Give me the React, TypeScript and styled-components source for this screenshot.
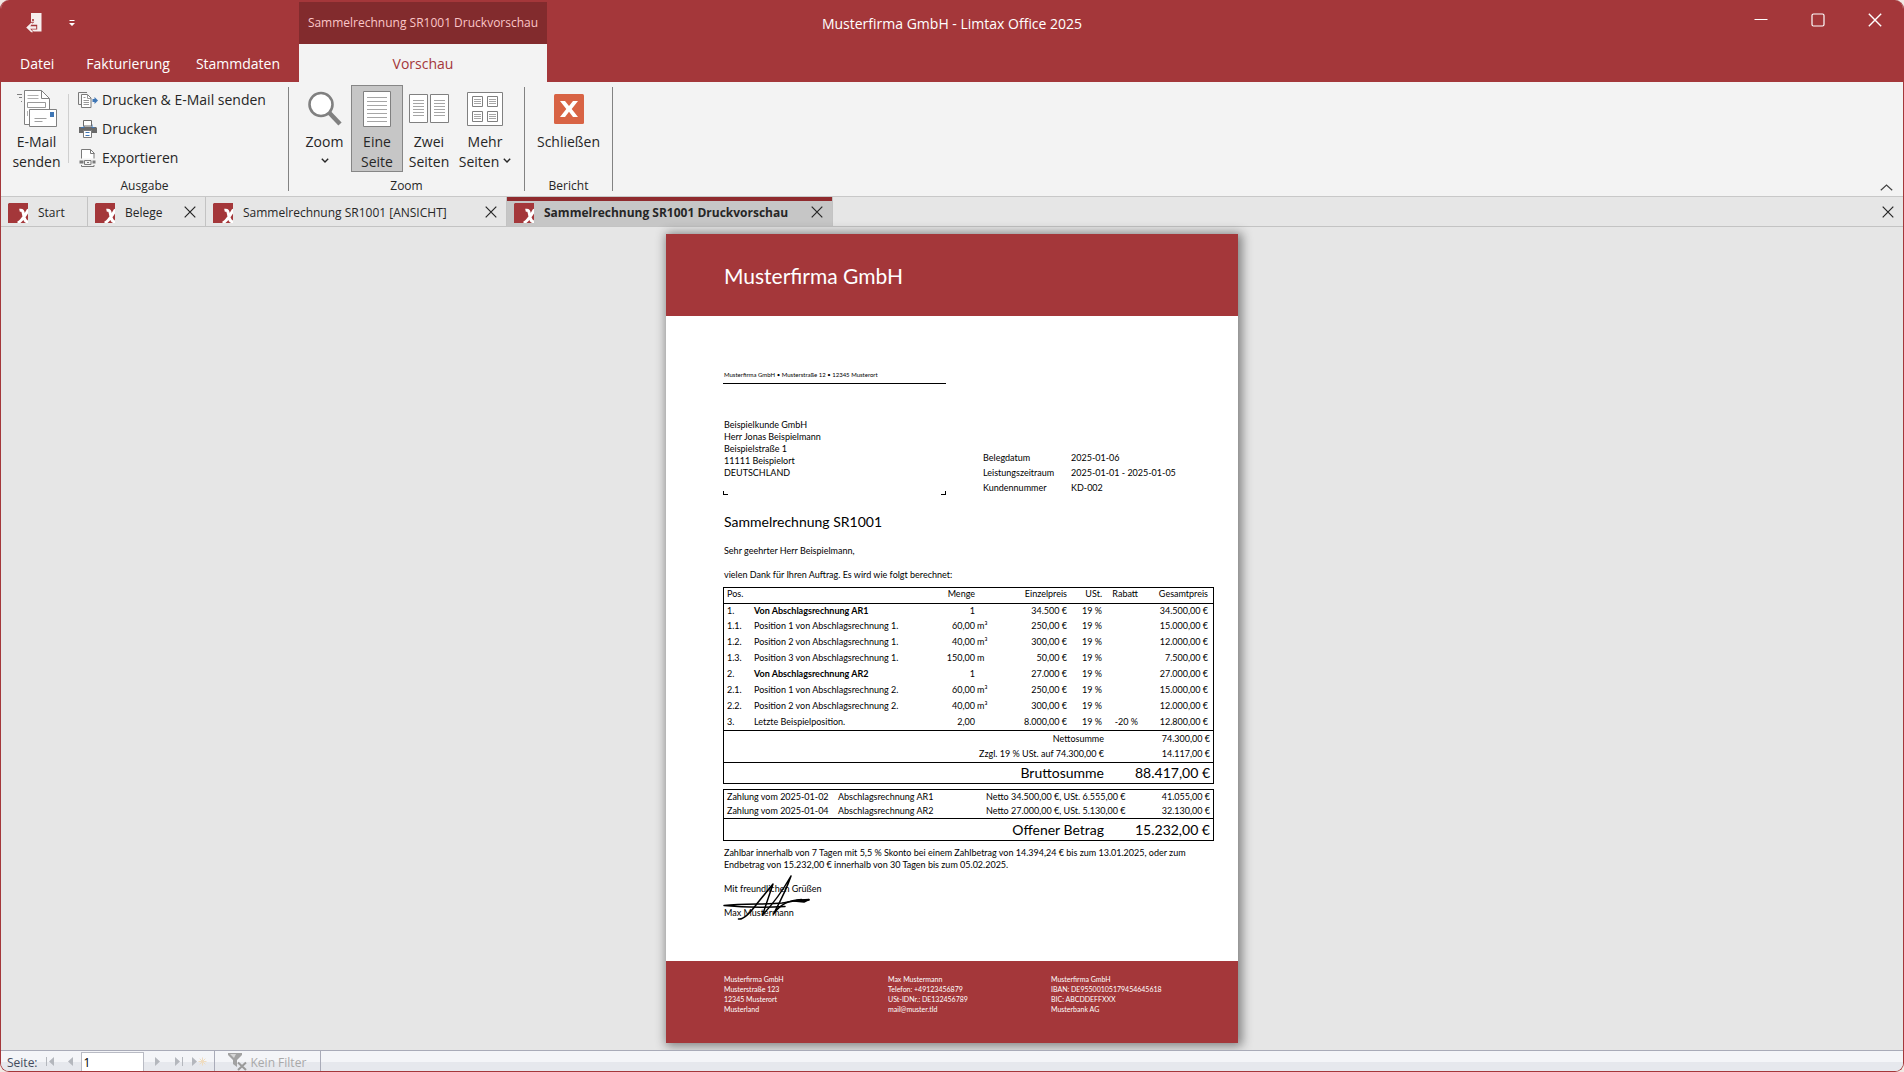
import React from "react";
import styled, { createGlobalStyle, css } from "styled-components";

const red = "#a4373a";
const uiFont = `"Open Sans", "Noto Sans", sans-serif`;
const paperFont = `Lato, "Open Sans", sans-serif`;

const GlobalStyle = createGlobalStyle`
  *, *::before, *::after { box-sizing: border-box; }
  body { margin: 0; background: #f1e9e4; font-family: ${uiFont}; color: #262626; }
  button, input { font: inherit; color: inherit; }
  button { padding: 0; border: 0; background: none; cursor: pointer; }
  svg { display: block; flex: none; }
`;

const Window = styled.div`
  display: flex;
  flex-direction: column;
  min-height: 100vh;
  overflow: hidden;
  border: 1px solid ${red};
  border-top: 0;
  border-radius: 9px;
  background: #e6e6e6;
`;

/* ---------- title bar ---------- */

const TitleBar = styled.header`
  display: grid;
  grid-template-columns: 1fr auto 1fr;
  height: 82px;
  background: ${red};
  color: #fff;
`;

const TitleLeft = styled.div`
  display: flex;
`;

const MenuArea = styled.div`
  display: flex;
  flex-direction: column;
  width: 298px;
`;

const QuickAccess = styled.div`
  display: flex;
  align-items: center;
  gap: 27px;
  height: 44px;
  padding: 2px 0 0 25px;
`;

const MenuTabs = styled.nav`
  display: flex;
  height: 38px;
`;

const MenuTab = styled.button<{ $pad: number }>`
  padding: 2px ${(p) => p.$pad}px 0;
  font-size: 14px;
  line-height: 20px;
`;

const ContextGroup = styled.div`
  display: flex;
  flex-direction: column;
  width: 248px;
  padding-top: 2px;
`;

const ContextTitle = styled.div`
  height: 42px;
  background: #822b2d;
  color: #fbc6c8;
  font-size: 12px;
  line-height: 41px;
  text-align: center;
  white-space: nowrap;
`;

const ContextTab = styled.button`
  flex: 1;
  background: #f3f3f3;
  color: ${red};
  font-size: 14px;
`;

const WindowTitle = styled.h1`
  margin: 0;
  font-size: 14px;
  font-weight: 400;
  line-height: 48px;
`;

const WindowControls = styled.div`
  display: flex;
  justify-content: flex-end;
  height: 40px;
`;

const WindowButton = styled.button`
  display: flex;
  align-items: center;
  justify-content: center;
  width: 57px;
`;

/* ---------- ribbon ---------- */

const Ribbon = styled.section`
  display: flex;
  height: 114px;
  background: #f3f3f3;
`;

const Group = styled.div<{ $width: number }>`
  display: flex;
  flex-direction: column;
  min-width: ${(p) => p.$width}px;
  padding-top: 3px;
`;

const GroupBody = styled.div`
  display: flex;
  flex: none;
  justify-content: center;
  height: 87px;
`;

const WideGroupBody = styled(GroupBody)`
  justify-content: flex-start;
  padding-left: 7px;
`;

const GroupLabel = styled.div`
  margin-top: 4px;
  font-size: 12px;
  line-height: 20px;
  text-align: center;
`;

const GroupDivider = styled.div`
  width: 1px;
  margin: 5px 0;
  background: #828282;
`;

const InnerDivider = styled.div`
  width: 1px;
  margin: 9px 9px 9px 3px;
  background: #cfcfcf;
`;

const BigButton = styled.button<{ $width: number; $active?: boolean }>`
  display: flex;
  flex-direction: column;
  align-items: center;
  width: ${(p) => p.$width}px;
  font-size: 14px;
  line-height: 20px;
  white-space: nowrap;
  ${(p) =>
    p.$active &&
    css`
      background: #c6c6c6;
      box-shadow: inset 0 0 0 1px #868686;
    `}
`;

const BigIcon = styled.span`
  display: flex;
  align-items: center;
  justify-content: center;
  height: 47px;
`;

const ButtonLine = styled.span`
  display: flex;
  align-items: center;
  gap: 4px;
  height: 20px;
`;

const CommandList = styled.div`
  display: flex;
  flex-direction: column;
`;

const Command = styled.button`
  display: flex;
  align-items: center;
  gap: 4px;
  height: 29px;
  font-size: 14px;
  white-space: nowrap;
`;

const CollapseButton = styled.button`
  display: flex;
  align-items: flex-end;
  margin-left: auto;
  padding: 0 10px 5px;
`;

/* ---------- document tabs ---------- */

const TabStrip = styled.div`
  display: flex;
  height: 31px;
  border-top: 1px solid #c8c8c8;
  border-bottom: 1px solid #c3c3c3;
`;

const DocTab = styled.div<{ $width: number; $active?: boolean }>`
  display: flex;
  align-items: center;
  width: ${(p) => p.$width}px;
  padding: 0 9px 0 7px;
  border-right: 1px solid #c3c3c3;
  ${(p) =>
    p.$active &&
    css`
      background: #c6c6c6;
      box-shadow: inset 0 4px 0 #8f2a2d;
    `}
`;

const DocTabName = styled.button<{ $active?: boolean }>`
  display: flex;
  align-items: center;
  gap: 10px;
  padding-top: 2px;
  font-size: 12px;
  font-weight: ${(p) => (p.$active ? 700 : 400)};
  white-space: nowrap;
`;

const CloseButton = styled.button`
  display: flex;
  margin-left: auto;
  align-items: center;
`;

const StripClose = styled(CloseButton)`
  padding-right: 9px;
`;

/* ---------- preview ---------- */

const Canvas = styled.main`
  display: flex;
  flex: 1;
  justify-content: center;
  align-items: flex-start;
  padding: 7px 0;
`;

const Paper = styled.article`
  display: flex;
  flex-direction: column;
  width: 572px;
  min-height: 809px;
  background: #fff;
  color: #000;
  font-family: ${paperFont};
  font-size: 9px;
  line-height: 12px;
  white-space: nowrap;
  box-shadow: 2px 1px 10px 2px rgba(0, 0, 0, 0.45);
`;

const PaperHeader = styled.header`
  height: 82px;
  padding-left: 58px;
  background: ${red};
  color: #fff;
  font-size: 21px;
  line-height: 84px;
`;

const PaperBody = styled.div`
  flex: 1;
  padding: 53px 24px 0 57px;
`;

const Sender = styled.div`
  width: 223px;
  height: 15px;
  padding-left: 1px;
  border-bottom: 1px solid #000;
  font-size: 6px;
`;

const AddressRow = styled.div`
  display: flex;
  gap: 37px;
  height: 111px;
`;

const AddressWindow = styled.div`
  display: flex;
  flex-direction: column;
  justify-content: space-between;
  width: 223px;
  padding-top: 35px;
`;

const Address = styled.address`
  padding-left: 1px;
  font-style: normal;
`;

const Corners = styled.div`
  display: flex;
  justify-content: space-between;
`;

const Corner = styled.span<{ $side: "left" | "right" }>`
  width: 5px;
  height: 4px;
  border-bottom: 1px solid #000;
  border-${(p) => p.$side}: 1px solid #000;
`;

const MetaList = styled.dl`
  display: grid;
  grid-template-columns: 88px auto;
  align-content: start;
  margin: 0;
  padding-top: 66px;
  line-height: 15px;
`;

const MetaValue = styled.dd`
  margin: 0;
`;

const InvoiceTitle = styled.h2`
  margin: 17px 0 0 1px;
  font-size: 14px;
  font-weight: 400;
  line-height: 20px;
`;

const Paragraph = styled.p<{ $top: number }>`
  margin: ${(p) => p.$top}px 0 0 1px;
`;

const Sheet = styled.table<{ $top: number }>`
  width: 100%;
  margin-top: ${(p) => p.$top}px;
  border: 1px solid #000;
  border-spacing: 0;
  table-layout: fixed;
`;

const Row = styled.tr<{ $height: number; $ruled?: boolean }>`
  height: ${(p) => p.$height}px;
  > * {
    ${(p) => p.$ruled && "border-top: 1px solid #000;"}
  }
`;

const Cell = styled.td<{ $right?: boolean; $pad?: number; $bold?: boolean; $large?: boolean }>`
  padding: 0;
  padding-${(p) => (p.$right ? "right" : "left")}: ${(p) => p.$pad ?? 0}px;
  text-align: ${(p) => (p.$right ? "right" : "left")};
  font-weight: ${(p) => (p.$bold ? 700 : 400)};
  ${(p) => p.$large && "font-size: 14px;"}
`;

const HeadCell = styled(Cell).attrs({ as: "th" })`
  vertical-align: top;
`;

const SignatureBlock = styled.div`
  position: relative;
  margin: 6px 0 0 1px;
  line-height: 24px;
`;

const SignatureInk = styled.svg`
  position: absolute;
  left: -1px;
  top: -3px;
`;

const PaperFooter = styled.footer`
  display: grid;
  grid-template-columns: 164px 163px auto;
  height: 82px;
  padding: 13px 0 0 58px;
  background: ${red};
  color: #fff;
  font-size: 7px;
  line-height: 10px;
`;

/* ---------- record bar ---------- */

const StatusBar = styled.footer`
  display: flex;
  align-items: stretch;
  height: 21px;
  border-top: 1px solid #a9abb8;
  background: linear-gradient(#f4f5f8 0 11px, #e6e8ed 11px);
  color: #444b5c;
  font-size: 12px;
`;

const PageLabel = styled.label`
  padding: 0 8px 0 6px;
  line-height: 23px;
`;

const NavButton = styled.button<{ $width: number }>`
  width: ${(p) => p.$width}px;
`;

const PageInput = styled.input`
  width: 63px;
  height: 19px;
  margin-top: 1px;
  padding: 1px 2px 0;
  border: 1px solid #b9bbc4;
  border-bottom: 0;
  background: #fff;
  color: #000;
`;

const FilterButton = styled.button`
  display: flex;
  align-items: center;
  gap: 4px;
  width: 107px;
  margin-left: 6px;
  padding: 2px 0 0 13px;
  border: solid #a9abb8;
  border-width: 0 1px;
  color: #a9a9a9;
`;

/* ---------- icons ---------- */

const CloseGlyph = ({ size = 12 }: { size?: number }) => (
  <svg width={size} height={size} viewBox="0 0 12 12" stroke="currentColor" strokeWidth="1.2" fill="none">
    <path d="M.7.7l10.6 10.6M11.3.7L.7 11.3" />
  </svg>
);

const Chevron = () => (
  <svg width="8" height="8" viewBox="0 0 8 8" stroke="currentColor" strokeWidth="1.4" fill="none">
    <path d="M.8.8L4 4 7.2.8" />
  </svg>
);

const AppLogo = () => (
  <svg width="20" height="20" viewBox="0 0 20 20">
    <path d="M1 0h19v20H0V1z" fill={red} />
    <path d="M9.5 19.8c3 0 9-9.5 11-13.300M11.500 7.300c3.500-.8 3.500 1.500 4.300 5.500s1.500 6.200 4.200 5.700" stroke="#fff" strokeWidth="3" fill="none" />
  </svg>
);

const DoorIcon = () => (
  <svg width="16" height="20" viewBox="0 0 16 20">
    <path d="M5 0h10.500v18.500H5z" fill="#f6eeee" />
    <path d="M0 14.200L5.500 8.800h2.800L5.600 11.800h5.600v4.700H5.600l2.700 3H5.500z" fill={red} />
    <path d="M.2 14.500l5-4.800h2l-3 3.500h6v2.500h-6l3 3.500h-2z" fill="#f6eeee" />
    <circle cx="7" cy="7" r="1.100" fill={red} />
  </svg>
);

const QuickMenuIcon = () => (
  <svg width="6" height="7" viewBox="0 0 6 7" fill="#fff">
    <path d="M.5 0h5v1h-5zM0 3h6L3 6z" />
  </svg>
);

const MailIcon = () => (
  <svg width="40" height="38" viewBox="0 0 40 38" fill="none" stroke="#808080" strokeWidth="1">
    <path d="M0 4.500h5M2 7.500h3M4 11.500h1" />
    <path d="M7.500.5h17l8 8v26h-25z" fill="#fff" />
    <path d="M24.500.5v8h8" />
    <path d="M10.500 5.500h11M10.500 8.500h11M10.500 21v5" stroke="#b0b0b0" />
    <path d="M10.500 12.500h18v5h-18z" stroke="#999" />
    <path d="M11 19h22v2H11z" fill="#fff" stroke="none" />
    <path d="M12.500 19.500h27v17h-27z" fill="#fff" />
    <path d="M17.500 28.500h12M17.500 31.500h8" stroke="#a0a0a0" />
    <path d="M33 22h4v5h-4z" fill="#3f76b5" stroke="none" />
  </svg>
);

const PrintMailIcon = () => (
  <svg width="20" height="18" viewBox="0 0 20 18" fill="none" stroke="#7a7a7a">
    <path d="M3 13.500H.5V1.500h8.500" />
    <path d="M3.500 3.500h6l3.500 3.500v9.500H3.500z" fill="#fff" />
    <path d="M9.500 3.500v4H13M5.500 6.500h2M5.500 9.500h5.500M5.500 11.500h5.500M5.500 13.500h5.500" stroke="#9a9a9a" />
    <path d="M14.500 9.500h3" stroke="#3f76b5" strokeWidth="3" />
    <path d="M16.500 6l3.500 3.500-3.500 3.500z" fill="#3f76b5" stroke="none" />
  </svg>
);

const PrinterIcon = () => (
  <svg width="20" height="18" viewBox="0 0 20 18">
    <path d="M1 7h17l1 1v5H1z" fill="#6a6a6a" />
    <path d="M3 7.500h3V4.500h8v3h2.500" stroke="#3f76b5" fill="none" />
    <path d="M5.500.5h8V6h-8z" fill="#fff" stroke="#6a6a6a" />
    <path d="M5.500 10.500h8v7h-8z" fill="#fff" stroke="#7a7a7a" />
    <path d="M7.500 12.500h4M7.500 15.500h4" stroke="#3f76b5" />
  </svg>
);

const ExportIcon = () => (
  <svg width="20" height="18" viewBox="0 0 20 18" fill="none" stroke="#7a7a7a">
    <path d="M3.500 9.500V.5h9l3.500 3.500v5.500" fill="#fff" />
    <path d="M12.500.5v4h4M3.500 16v1.500h12.500V16" />
    <path d="M2.500 12.500h2v1h-2zM15.500 12.500h1v1h-1z" strokeWidth="2" />
    <path d="M6.500 11.500h6.500v4h-6.500zM9 13.500h2" />
  </svg>
);

const ZoomIcon = () => (
  <svg width="36" height="36" viewBox="0 0 36 36" stroke="#808080">
    <path d="M22 21.500L33 33" strokeWidth="4.500" />
    <circle cx="14" cy="13.500" r="11.500" fill="#fff" strokeWidth="2.600" />
  </svg>
);

const lines = (x: number, y: number, w: number, count: number, step: number) =>
  Array.from({ length: count }, (_, i) => `M${x} ${y + i * step}h${w}`).join("");

const OnePageIcon = () => (
  <svg width="28" height="36" viewBox="0 0 28 36" fill="none">
    <path d="M.5.5h27v35H.5z" fill="#fff" stroke="#808080" />
    <path d={lines(4, 6.5, 20, 7, 4)} stroke="#a6a6a6" />
  </svg>
);

const TwoPagesIcon = () => (
  <svg width="40" height="30" viewBox="0 0 40 30" fill="none">
    <path d="M.5.5h18v28H.5zM21.500.5h18v28h-18z" fill="#fff" stroke="#808080" />
    <path d={lines(4, 6.5, 11, 6, 3) + lines(25, 6.5, 11, 6, 3)} stroke="#a6a6a6" />
  </svg>
);

const ManyPagesIcon = () => (
  <svg width="36" height="34" viewBox="0 0 36 34" fill="none">
    <path d="M.5.5h35v33H.5z" fill="#fff" stroke="#808080" />
    <path d="M5.500 4.500h10v10h-10zM20.500 4.500h10v10h-10zM5.500 19.500h10v10h-10zM20.500 19.500h10v10h-10z" stroke="#808080" />
    <path
      d={lines(7, 7.5, 7, 3, 2) + lines(22, 7.5, 7, 3, 2) + lines(7, 22.5, 7, 3, 2) + lines(22, 22.5, 7, 3, 2)}
      stroke="#a6a6a6"
    />
  </svg>
);

const CloseBoxIcon = () => (
  <svg width="30" height="30" viewBox="0 0 30 30">
    <rect width="30" height="30" rx="1.500" fill="#d86344" />
    <path d="M6 7h5l4 5 4-5h5l-6.300 8L24 23h-5l-4-5.300L11 23H6l6.300-8z" fill="#fff" />
  </svg>
);

const MinimizeIcon = () => (
  <svg width="14" height="14" viewBox="0 0 14 14" stroke="#fff" fill="none">
    <path d="M.5 6.500h13" />
  </svg>
);

const MaximizeIcon = () => (
  <svg width="14" height="14" viewBox="0 0 14 14" stroke="#fff" strokeWidth="1.200" fill="none">
    <rect x="1" y="1" width="12" height="12" rx="1.500" />
  </svg>
);

const CollapseIcon = () => (
  <svg width="13" height="7" viewBox="0 0 13 7" stroke="#444" strokeWidth="1.200" fill="none">
    <path d="M.8 6.300l5.700-5.300 5.700 5.300" />
  </svg>
);

const NavIcon = ({ d, width, star }: { d: string; width: number; star?: boolean }) => (
  <svg width={width} height="20" viewBox={`0 0 ${width} 20`} fill="#b4b7bd">
    <path d={d} />
    {star && <path d="M11.500 6.500v8M7.500 10.500h8M8.700 7.700l5.600 5.600M14.300 7.700l-5.600 5.600" stroke="#efdcc0" strokeWidth="1" />}
  </svg>
);

const FilterIcon = () => (
  <svg width="19" height="18" viewBox="0 0 19 18" fill="#a2a2a2">
    <path d="M0 0h14v2L9 7v7l-4-3V7L0 2z" />
    <path d="M2 1h6L6 5z" fill="#d6d6d6" />
    <path d="M10 9.500l8 7.500M18 9.500L10 17" stroke="#9a9a9a" strokeWidth="2" />
  </svg>
);

/* ---------- data ---------- */

interface Item {
  pos: string;
  text: string;
  qty: string;
  unit?: string;
  price: string;
  discount?: string;
  total: string;
  bold?: boolean;
}

const items: Item[] = [
  { pos: "1.", text: "Von Abschlagsrechnung AR1", qty: "1", price: "34.500 €", total: "34.500,00 €", bold: true },
  { pos: "1.1.", text: "Position 1 von Abschlagsrechnung 1.", qty: "60,00", unit: "m³", price: "250,00 €", total: "15.000,00 €" },
  { pos: "1.2.", text: "Position 2 von Abschlagsrechnung 1.", qty: "40,00", unit: "m³", price: "300,00 €", total: "12.000,00 €" },
  { pos: "1.3.", text: "Position 3 von Abschlagsrechnung 1.", qty: "150,00", unit: "m", price: "50,00 €", total: "7.500,00 €" },
  { pos: "2.", text: "Von Abschlagsrechnung AR2", qty: "1", price: "27.000 €", total: "27.000,00 €", bold: true },
  { pos: "2.1.", text: "Position 1 von Abschlagsrechnung 2.", qty: "60,00", unit: "m³", price: "250,00 €", total: "15.000,00 €" },
  { pos: "2.2.", text: "Position 2 von Abschlagsrechnung 2.", qty: "40,00", unit: "m³", price: "300,00 €", total: "12.000,00 €" },
  { pos: "3.", text: "Letzte Beispielposition.", qty: "2,00", price: "8.000,00 €", discount: "-20 %", total: "12.800,00 €" },
];

const payments = [
  ["Zahlung vom 2025-01-02", "Abschlagsrechnung AR1", "Netto 34.500,00 €, USt. 6.555,00 €", "41.055,00 €"],
  ["Zahlung vom 2025-01-04", "Abschlagsrechnung AR2", "Netto 27.000,00 €, USt. 5.130,00 €", "32.130,00 €"],
];

const footerColumns = [
  ["Musterfirma GmbH", "Musterstraße 123", "12345 Musterort", "Musterland"],
  ["Max Mustermann", "Telefon: +49123456879", "USt-IDNr.: DE132456789", "mail@muster.tld"],
  ["Musterfirma GmbH", "IBAN: DE95500105179454645618", "BIC: ABCDDEFFXXX", "Musterbank AG"],
];

const docTabs = [
  { name: "Start", width: 87 },
  { name: "Belege", width: 118, closable: true },
  { name: "Sammelrechnung SR1001 [ANSICHT]", width: 301, closable: true },
  { name: "Sammelrechnung SR1001 Druckvorschau", width: 326, closable: true, active: true },
];

const Lines = ({ of }: { of: string[] }) => (
  <div>
    {of.map((line) => (
      <div key={line}>{line}</div>
    ))}
  </div>
);

const ItemTable = () => (
  <Sheet $top={6}>
    <colgroup>
      {[30, 166, 55, 25, 67, 37, 34, 75].map((width, i) => (
        <col key={i} width={width} />
      ))}
    </colgroup>
    <thead>
      <Row $height={15}>
        <HeadCell $pad={3} colSpan={2}>Pos.</HeadCell>
        <HeadCell $right>Menge</HeadCell>
        <Cell />
        <HeadCell $right>Einzelpreis</HeadCell>
        <HeadCell $right $pad={2}>USt.</HeadCell>
        <HeadCell $right>Rabatt</HeadCell>
        <HeadCell $right $pad={5}>Gesamtpreis</HeadCell>
      </Row>
    </thead>
    <tbody>
      {items.map((item, i) => (
        <Row key={item.pos} $height={i ? 16 : 15} $ruled={i === 0}>
          <Cell $pad={3}>{item.pos}</Cell>
          <Cell $bold={item.bold}>{item.text}</Cell>
          <Cell $right>{item.qty}</Cell>
          <Cell $pad={2}>{item.unit}</Cell>
          <Cell $right>{item.price}</Cell>
          <Cell $right $pad={2}>19 %</Cell>
          <Cell $right>{item.discount}</Cell>
          <Cell $right $pad={5}>{item.total}</Cell>
        </Row>
      ))}
      <Row $height={16} $ruled>
        <Cell colSpan={6} $right>Nettosumme</Cell>
        <Cell colSpan={2} $right $pad={3}>74.300,00 €</Cell>
      </Row>
      <Row $height={16}>
        <Cell colSpan={6} $right>Zzgl. 19 % USt. auf 74.300,00 €</Cell>
        <Cell colSpan={2} $right $pad={3}>14.117,00 €</Cell>
      </Row>
      <Row $height={21} $ruled>
        <Cell colSpan={6} $right $large>Bruttosumme</Cell>
        <Cell colSpan={2} $right $pad={3} $large>88.417,00 €</Cell>
      </Row>
    </tbody>
  </Sheet>
);

const PaymentTable = () => (
  <Sheet $top={5}>
    <colgroup>
      {[114, 148, 144, 83].map((width, i) => (
        <col key={i} width={width} />
      ))}
    </colgroup>
    <tbody>
      {payments.map(([date, name, detail, amount]) => (
        <Row key={date} $height={14}>
          <Cell $pad={3}>{date}</Cell>
          <Cell>{name}</Cell>
          <Cell>{detail}</Cell>
          <Cell $right $pad={3}>{amount}</Cell>
        </Row>
      ))}
      <Row $height={22} $ruled>
        <Cell colSpan={3} $right $pad={26} $large>Offener Betrag</Cell>
        <Cell $right $pad={3} $large>15.232,00 €</Cell>
      </Row>
    </tbody>
  </Sheet>
);

const Signature = () => (
  <SignatureInk width="90" height="48" viewBox="0 0 90 48" fill="none" stroke="#000" strokeLinecap="round" strokeLinejoin="round" aria-hidden="true">
    <path d="M15.500 45c5 1 11-5 19-16L50 10 39.500 41C50 30 60 16 68 2 64 14 58 26 50.500 40c6-9 14-14 28-14.500" strokeWidth="1.500" />
    <path d="M1 31.500c20-2 45-1 58-2.500C66 28 73 25.500 86 26M1 31.500c20 2 42 2 61 1" strokeWidth="1.500" />
    <path d="M71 27l7-1 8-.5-5 2.500z" fill="#000" strokeWidth="1.500" />
  </SignatureInk>
);

const Invoice = () => (
  <Paper>
    <PaperHeader>Musterfirma GmbH</PaperHeader>
    <PaperBody>
      <Sender>Musterfirma GmbH • Musterstraße 12 • 12345 Musterort</Sender>
      <AddressRow>
        <AddressWindow>
          <Address>
            <Lines of={["Beispielkunde GmbH", "Herr Jonas Beispielmann", "Beispielstraße 1", "11111 Beispielort", "DEUTSCHLAND"]} />
          </Address>
          <Corners>
            <Corner $side="left" />
            <Corner $side="right" />
          </Corners>
        </AddressWindow>
        <MetaList>
          <dt>Belegdatum</dt>
          <MetaValue>2025-01-06</MetaValue>
          <dt>Leistungszeitraum</dt>
          <MetaValue>2025-01-01 - 2025-01-05</MetaValue>
          <dt>Kundennummer</dt>
          <MetaValue>KD-002</MetaValue>
        </MetaList>
      </AddressRow>
      <InvoiceTitle>Sammelrechnung SR1001</InvoiceTitle>
      <Paragraph $top={13}>Sehr geehrter Herr Beispielmann,</Paragraph>
      <Paragraph $top={12}>vielen Dank für Ihren Auftrag. Es wird wie folgt berechnet:</Paragraph>
      <ItemTable />
      <PaymentTable />
      <Paragraph $top={6}>
        Zahlbar innerhalb von 7 Tagen mit 5,5 % Skonto bei einem Zahlbetrag von 14.394,24 € bis zum 13.01.2025, oder zum
        <br />
        Endbetrag von 15.232,00 € innerhalb von 30 Tagen bis zum 05.02.2025.
      </Paragraph>
      <SignatureBlock>
        <div>Mit freundlichen Grüßen</div>
        <div>Max Mustermann</div>
        <Signature />
      </SignatureBlock>
    </PaperBody>
    <PaperFooter>
      {footerColumns.map((column) => (
        <Lines key={column[1]} of={column} />
      ))}
    </PaperFooter>
  </Paper>
);

export default function App() {
  return (
    <>
      <GlobalStyle />
      <Window>
        <TitleBar>
          <TitleLeft>
            <MenuArea>
              <QuickAccess>
                <button aria-label="Beenden"><DoorIcon /></button>
                <button aria-label="Schnellzugriff anpassen"><QuickMenuIcon /></button>
              </QuickAccess>
              <MenuTabs>
                <MenuTab $pad={19}>Datei</MenuTab>
                <MenuTab $pad={13}>Fakturierung</MenuTab>
                <MenuTab $pad={13}>Stammdaten</MenuTab>
              </MenuTabs>
            </MenuArea>
            <ContextGroup>
              <ContextTitle>Sammelrechnung SR1001 Druckvorschau</ContextTitle>
              <ContextTab>Vorschau</ContextTab>
            </ContextGroup>
          </TitleLeft>
          <WindowTitle>Musterfirma GmbH - Limtax Office 2025</WindowTitle>
          <WindowControls>
            <WindowButton aria-label="Minimieren"><MinimizeIcon /></WindowButton>
            <WindowButton aria-label="Maximieren"><MaximizeIcon /></WindowButton>
            <WindowButton aria-label="Fenster schließen"><CloseGlyph size={14} /></WindowButton>
          </WindowControls>
        </TitleBar>

        <Ribbon>
          <Group $width={287}>
            <WideGroupBody>
              <BigButton $width={57}>
                <BigIcon><MailIcon /></BigIcon>
                <ButtonLine>E-Mail</ButtonLine>
                <ButtonLine>senden</ButtonLine>
              </BigButton>
              <InnerDivider />
              <CommandList>
                <Command><PrintMailIcon />Drucken &amp; E-Mail senden</Command>
                <Command><PrinterIcon />Drucken</Command>
                <Command><ExportIcon />Exportieren</Command>
              </CommandList>
            </WideGroupBody>
            <GroupLabel>Ausgabe</GroupLabel>
          </Group>
          <GroupDivider />
          <Group $width={235}>
            <GroupBody>
              <BigButton $width={53}>
                <BigIcon><ZoomIcon /></BigIcon>
                <ButtonLine>Zoom</ButtonLine>
                <ButtonLine><Chevron /></ButtonLine>
              </BigButton>
              <BigButton $width={52} $active>
                <BigIcon><OnePageIcon /></BigIcon>
                <ButtonLine>Eine</ButtonLine>
                <ButtonLine>Seite</ButtonLine>
              </BigButton>
              <BigButton $width={52}>
                <BigIcon><TwoPagesIcon /></BigIcon>
                <ButtonLine>Zwei</ButtonLine>
                <ButtonLine>Seiten</ButtonLine>
              </BigButton>
              <BigButton $width={60}>
                <BigIcon><ManyPagesIcon /></BigIcon>
                <ButtonLine>Mehr</ButtonLine>
                <ButtonLine>Seiten<Chevron /></ButtonLine>
              </BigButton>
            </GroupBody>
            <GroupLabel>Zoom</GroupLabel>
          </Group>
          <GroupDivider />
          <Group $width={87}>
            <GroupBody>
              <BigButton $width={70}>
                <BigIcon><CloseBoxIcon /></BigIcon>
                <ButtonLine>Schließen</ButtonLine>
                <ButtonLine />
              </BigButton>
            </GroupBody>
            <GroupLabel>Bericht</GroupLabel>
          </Group>
          <GroupDivider />
          <CollapseButton aria-label="Menüband reduzieren"><CollapseIcon /></CollapseButton>
        </Ribbon>

        <TabStrip>
          {docTabs.map((tab) => (
            <DocTab key={tab.name} $width={tab.width} $active={tab.active}>
              <DocTabName $active={tab.active}><AppLogo />{tab.name}</DocTabName>
              {tab.closable && <CloseButton aria-label={`${tab.name} schließen`}><CloseGlyph /></CloseButton>}
            </DocTab>
          ))}
          <StripClose aria-label="Schließen"><CloseGlyph /></StripClose>
        </TabStrip>

        <Canvas>
          <Invoice />
        </Canvas>

        <StatusBar>
          <PageLabel htmlFor="page">Seite:</PageLabel>
          <NavButton $width={18} aria-label="Erste Seite"><NavIcon width={12} d="M0 6h1v9H0zM8 6v9L3 10.500z" /></NavButton>
          <NavButton $width={17} aria-label="Vorherige Seite"><NavIcon width={12} d="M9 6v9L4 10.500z" /></NavButton>
          <PageInput id="page" defaultValue="1" />
          <NavButton $width={29} aria-label="Nächste Seite"><NavIcon width={20} d="M11 6v9l5-4.500z" /></NavButton>
          <NavButton $width={18} aria-label="Letzte Seite"><NavIcon width={12} d="M2 6v9l5-4.500zM9 6h1v9H9z" /></NavButton>
          <NavButton $width={17} aria-label="Neue Seite"><NavIcon width={17} star d="M1 6v9l5-4.500z" /></NavButton>
          <FilterButton><FilterIcon />Kein Filter</FilterButton>
        </StatusBar>
      </Window>
    </>
  );
}
